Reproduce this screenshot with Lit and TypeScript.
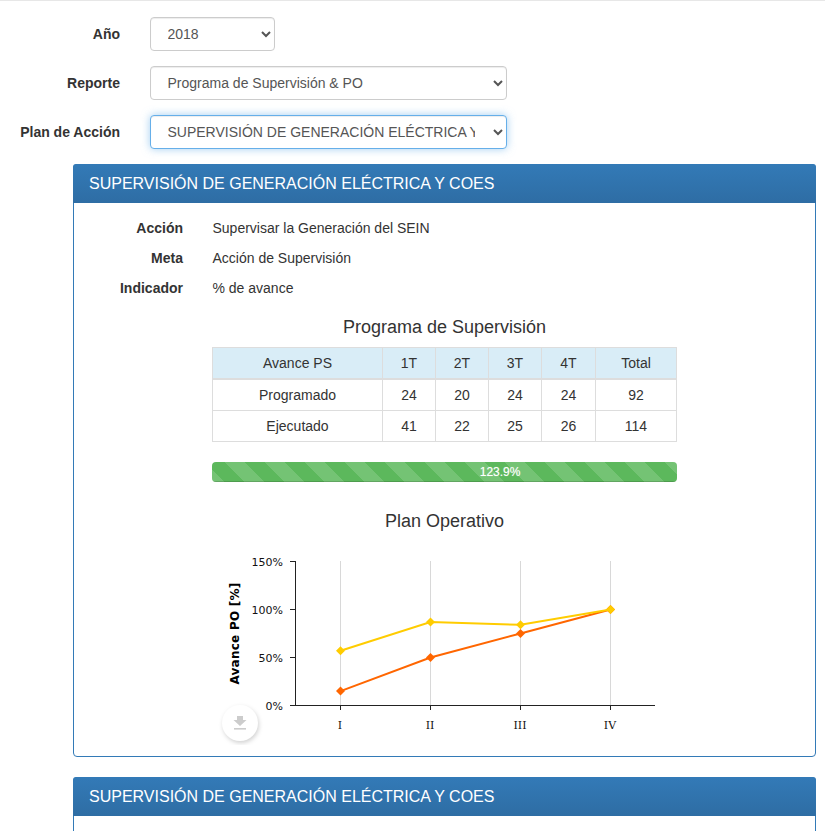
import { LitElement, html, svg, css } from "lit";
import { customElement } from "lit/decorators.js";

const TITLE = "SUPERVISIÓN DE GENERACIÓN ELÉCTRICA Y COES";

const infoRows = [
	["Acción", "Supervisar la Generación del SEIN"],
	["Meta", "Acción de Supervisión"],
	["Indicador", "% de avance"],
];

const tableRows = [
	["Programado", 24, 20, 24, 24, 92],
	["Ejecutado", 41, 22, 25, 26, 114],
];

// chart plot area, in svg coordinates
const LEFT = 83;
const RIGHT = 443;
const TOP = 16;
const BOTTOM = 160;
const categories = ["I", "II", "III", "IV"];
const catX = [128, 218, 308, 398];
const yTicks = [0, 50, 100, 150];
const series = [
	{ color: "#ff6600", values: [15, 50, 75, 100] },
	{ color: "#ffcc00", values: [57, 87, 84, 100] },
];

const toY = (v: number) => BOTTOM - (v / 150) * (BOTTOM - TOP);

@customElement("po-chart")
export class PoChart extends LitElement {
	static styles = css`
		:host {
			display: block;
			width: 465px;
			height: 200px;
		}

		svg {
			display: block;
		}

		.y-label {
			font: 11px "DejaVu Sans", sans-serif;
			fill: #111;
			text-anchor: end;
		}

		.x-label {
			font: 11px "DejaVu Serif", serif;
			fill: #111;
			text-anchor: middle;
		}

		.y-title {
			font: bold 12px "DejaVu Sans", sans-serif;
			letter-spacing: 0.25px;
			fill: #000;
			text-anchor: middle;
		}

		.export {
			filter: drop-shadow(1px 2px 2px rgba(0, 0, 0, 0.18));
		}
	`;

	render() {
		return html`
			<svg width="465" height="200" viewBox="0 0 465 200">
				${catX.map(
					(x) => svg`<line x1=${x + 0.5} x2=${x + 0.5} y1=${TOP} y2=${BOTTOM} stroke="#d8d8d8" />`
				)}
				<line x1=${LEFT} x2=${RIGHT} y1=${BOTTOM + 0.5} y2=${BOTTOM + 0.5} stroke="#222" />
				<line x1=${LEFT + 0.5} x2=${LEFT + 0.5} y1=${TOP} y2=${BOTTOM} stroke="#222" />
				${yTicks.map((t) => {
					const y = toY(t) + 0.5;
					return svg`
						<line x1=${LEFT - 5} x2=${LEFT} y1=${y} y2=${y} stroke="#222" />
						<text class="y-label" x=${LEFT - 12} y=${y + 4}>${t}%</text>
					`;
				})}
				${catX.map(
					(x, i) => svg`
						<line x1=${x + 0.5} x2=${x + 0.5} y1=${BOTTOM} y2=${BOTTOM + 5} stroke="#222" />
						<text class="x-label" x=${x} y=${BOTTOM + 24}>${categories[i]}</text>
					`
				)}
				<text class="y-title" transform="translate(27 88.5) rotate(-90)">Avance PO [%]</text>
				${series.map((s) => {
					const pts = s.values.map((v, i) => [catX[i] + 0.5, toY(v) + 0.5]);
					return svg`
						<polyline points=${pts.map((p) => p.join(",")).join(" ")} fill="none" stroke=${s.color} stroke-width="2" />
						${pts.map(
							([x, y]) => svg`<path d="M${x} ${y - 4.5}l4.5 4.5-4.5 4.5-4.5-4.5z" fill=${s.color} />`
						)}
					`;
				})}
				<circle class="export" cx="28" cy="178" r="18" fill="#fff" />
				<path d="M25 171h6v4h3.5l-6.5 6-6.5-6h3.5z" fill="#ccc" />
				<rect x="22" y="183" width="12" height="1.6" fill="#ccc" />
			</svg>
		`;
	}
}

@customElement("app-root")
export class AppRoot extends LitElement {
	static styles = css`
		:host {
			display: block;
			height: 100vh;
			overflow: hidden;
			box-sizing: border-box;
			border-top: 1px solid #e7e7e7;
			font: 14px/20px "Liberation Sans", Arial, sans-serif;
			color: #333;
			background: #fff;
		}

		.filters {
			display: grid;
			grid-template-columns: 120px max-content;
			column-gap: 30px;
			row-gap: 15px;
			align-items: center;
			padding-top: 16px;
		}

		.filters label {
			font-weight: bold;
			text-align: right;
		}

		select {
			display: block;
			box-sizing: border-box;
			height: 34px;
			width: 357px;
			padding: 6px 12px 6px 12.5px;
			font: inherit;
			color: #555;
			background: #fff;
			border: 1px solid #ccc;
			border-radius: 4px;
			box-shadow: inset 0 1px 1px rgba(0, 0, 0, 0.075);
		}

		select.short {
			width: 125px;
		}

		select.focus {
			padding-right: 15px;
			border-color: #66afe9;
			box-shadow: inset 0 1px 1px rgba(0, 0, 0, 0.075), 0 0 8px rgba(102, 175, 233, 0.6);
		}

		.panel {
			box-sizing: border-box;
			width: 743px;
			margin: 0 0 20px 73px;
			border: 1px solid #337ab7;
			border-radius: 4px;
		}

		.filters + .panel {
			margin-top: 15px;
		}

		.panel-heading {
			margin: -1px -1px 0;
			padding: 10px 16px;
			height: 39px;
			box-sizing: border-box;
			font-size: 16px;
			line-height: 19px;
			color: #fff;
			background: linear-gradient(to bottom, #337ab7 0, #2e6da4 100%);
			border-radius: 3px 3px 0 0;
		}

		.panel-body {
			padding: 15px 0 11px;
		}

		.panel-body.empty {
			height: 100px;
		}

		.info {
			display: grid;
			grid-template-columns: 109px 1fr;
			column-gap: 29.5px;
			row-gap: 10px;
		}

		.info b {
			text-align: right;
		}

		h4 {
			margin: 0;
			font-size: 18px;
			font-weight: normal;
			line-height: 20px;
			text-align: center;
		}

		.ps-title {
			margin-top: 19px;
		}

		table {
			width: 464px;
			margin: 10px 0 0 138px;
			border-collapse: collapse;
			table-layout: fixed;
		}

		th,
		td {
			padding: 5px;
			border: 1px solid #ddd;
			font-weight: normal;
			text-align: center;
		}

		th {
			background: #d9edf7;
			border-bottom-width: 2px;
		}

		.progress {
			width: 465px;
			height: 20px;
			margin: 20px auto 0;
			overflow: hidden;
			background: #f5f5f5;
			border-radius: 4px;
		}

		.progress-bar {
			height: 20px;
			font-size: 12px;
			line-height: 20px;
			color: #fff;
			text-align: center;
			text-shadow: 0 0 1px rgba(255, 255, 255, 0.5);
			background-color: #5cb85c;
			background-image: linear-gradient(
				45deg,
				rgba(255, 255, 255, 0.15) 25%,
				transparent 25%,
				transparent 50%,
				rgba(255, 255, 255, 0.15) 50%,
				rgba(255, 255, 255, 0.15) 75%,
				transparent 75%,
				transparent
			);
			background-size: 40px 40px;
			background-position: 13px 0;
			box-shadow: inset 0 -1px 0 rgba(0, 0, 0, 0.15);
		}

		.po-title {
			margin-top: 29px;
		}

		po-chart {
			margin: 14px auto 0;
		}
	`;

	private renderHeading() {
		return html`<div class="panel-heading">${TITLE}</div>`;
	}

	render() {
		const pct = 123.9;
		return html`
			<div class="filters">
				<label>Año</label>
				<select class="short"><option>2018</option></select>
				<label>Reporte</label>
				<select><option>Programa de Supervisión &amp; PO</option></select>
				<label>Plan de Acción</label>
				<select class="focus"><option>${TITLE}</option></select>
			</div>

			<div class="panel">
				${this.renderHeading()}
				<div class="panel-body">
					<div class="info">
						${infoRows.map(([k, v]) => html`<b>${k}</b><span>${v}</span>`)}
					</div>

					<h4 class="ps-title">Programa de Supervisión</h4>
					<table>
						<colgroup>
							${[170, 53, 53, 53, 54, 81].map(
								(w) => html`<col style="width: ${w}px" />`
							)}
						</colgroup>
						<thead>
							<tr>
								${["Avance PS", "1T", "2T", "3T", "4T", "Total"].map(
									(h) => html`<th>${h}</th>`
								)}
							</tr>
						</thead>
						<tbody>
							${tableRows.map(
								(row) => html`<tr>${row.map((c) => html`<td>${c}</td>`)}</tr>`
							)}
						</tbody>
					</table>

					<div class="progress">
						<div class="progress-bar" style="width: ${pct}%">${pct}%</div>
					</div>

					<h4 class="po-title">Plan Operativo</h4>
					<po-chart></po-chart>
				</div>
			</div>

			<div class="panel">
				${this.renderHeading()}
				<div class="panel-body empty"></div>
			</div>
		`;
	}
}
